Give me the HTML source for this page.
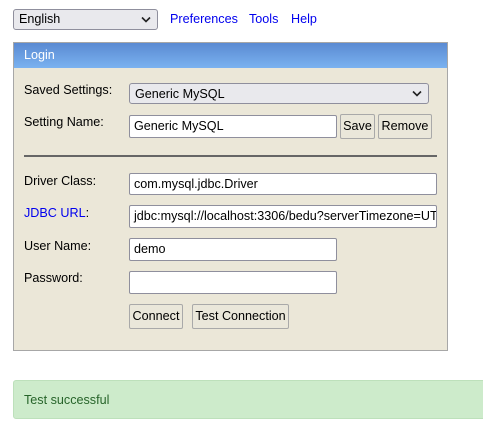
<!DOCTYPE html>
<html><head><style>
*{box-sizing:border-box}
body{margin:0;background:#fff;font-family:"Liberation Sans",Arial,sans-serif;font-size:12.6px;color:#000;position:relative;width:483px;height:440px;overflow:hidden}
.a{position:absolute}
.sel{background:#e9e9ed;border:1px solid #8f8f9d;border-radius:3px;padding:0 0 0 5px;line-height:18px;font-size:12.6px}
.sel svg{position:absolute;right:6px;top:6px}
.inp{background:#fff;border:1px solid #8f8f9d;border-radius:2px;padding-left:4px;font-size:12.6px;white-space:nowrap;overflow:hidden}
.btn{background:#eae7da;border:1px solid #a9a9a9;border-radius:2px;text-align:center;font-size:12.6px}
a{color:#0000ee;text-decoration:none}
.lbl{position:absolute;left:24px}
</style></head><body>
<div class="a sel" style="left:13px;top:9px;width:145px;height:21px">English<svg width="10" height="7" viewBox="0 0 10 7"><path d="M1 1.5L5 5.5L9 1.5" stroke="#222" stroke-width="1.6" fill="none"/></svg></div>
<a class="a" style="left:170px;top:12px">Preferences</a>
<a class="a" style="left:249px;top:12px">Tools</a>
<a class="a" style="left:291px;top:12px">Help</a>

<div class="a" style="left:13px;top:42px;width:435px;height:309px;background:#ebe7d8;border:1px solid #a7a7a7"></div>
<div class="a" style="left:14px;top:43px;width:433px;height:25px;background:linear-gradient(#5a8ad2,#7ab2f0);color:#fff;padding:5px 0 0 10px">Login</div>

<div class="lbl" style="top:83px">Saved Settings:</div>
<div class="a sel" style="left:129px;top:83px;width:300px;height:21px;padding-top:1px">Generic MySQL<svg width="10" height="7" viewBox="0 0 10 7"><path d="M1 1.5L5 5.5L9 1.5" stroke="#222" stroke-width="1.6" fill="none"/></svg></div>

<div class="lbl" style="top:115px">Setting Name:</div>
<div class="a inp" style="left:129px;top:115px;width:208px;height:23px;line-height:21px">Generic MySQL</div>
<div class="a btn" style="left:340px;top:114px;width:35px;height:25px;line-height:23px">Save</div>
<div class="a btn" style="left:378px;top:114px;width:54px;height:25px;line-height:23px">Remove</div>

<div class="a" style="left:24px;top:155px;width:413px;height:2px;background:#666"></div>

<div class="lbl" style="top:174px">Driver Class:</div>
<div class="a inp" style="left:129px;top:173px;width:308px;height:22px;line-height:20px">com.mysql.jdbc.Driver</div>
<div class="lbl" style="top:206px"><span style="color:#0000ee">JDBC URL</span>:</div>
<div class="a inp" style="left:129px;top:205px;width:308px;height:23px;line-height:21px">jdbc:mysql://localhost:3306/bedu?serverTimezone=UTC</div>
<div class="lbl" style="top:239px">User Name:</div>
<div class="a inp" style="left:129px;top:238px;width:208px;height:23px;line-height:21px">demo</div>
<div class="lbl" style="top:271px">Password:</div>
<div class="a inp" style="left:129px;top:271px;width:208px;height:23px"></div>
<div class="a btn" style="left:129px;top:304px;width:54px;height:25px;line-height:23px">Connect</div>
<div class="a btn" style="left:192px;top:304px;width:97px;height:25px;line-height:23px">Test Connection</div>

<div class="a" style="left:13px;top:380px;width:480px;height:39px;background:#cdebcb;border:1px solid #bde0bb;border-radius:3px;color:#27642a;padding:12px 0 0 10px">Test successful</div>
</body></html>
